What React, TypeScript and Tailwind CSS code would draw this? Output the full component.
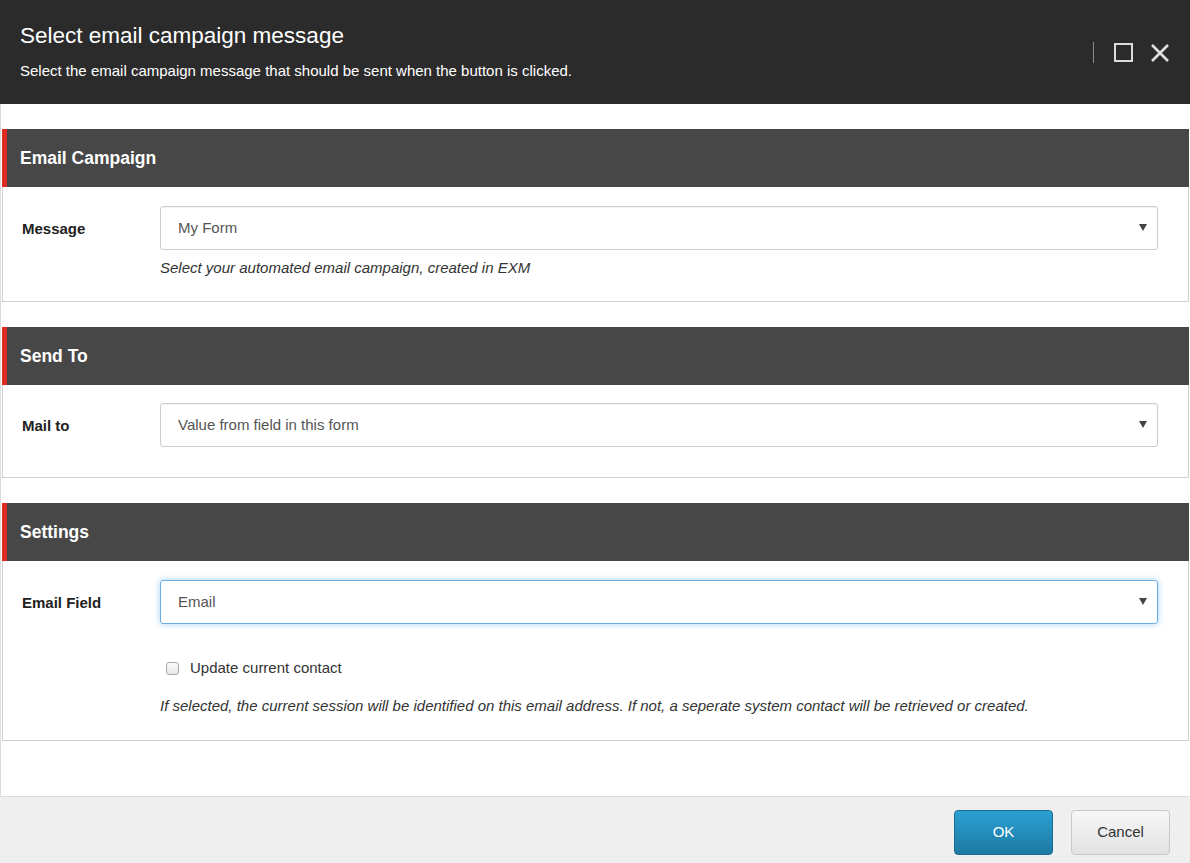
import React from "react";

const font = { fontFamily: '"Liberation Sans", Arial, sans-serif' };

interface PanelProps {
  title: string;
  children: React.ReactNode;
  bodyClass?: string;
}

const Panel: React.FC<PanelProps> = ({ title, children, bodyClass }) => (
  <div className="flex flex-col">
    <div className="h-[58px] bg-[#474747] border-l-[5px] border-[#e02b20] flex items-center pl-[13px]">
      <span className="text-white font-bold text-[17.5px]">{title}</span>
    </div>
    <div className={`border border-t-0 border-[#d0d0d0] ${bodyClass ?? ""}`}>
      {children}
    </div>
  </div>
);

const Select = ({ value, focused }: { value: string; focused?: boolean }) => (
  <div
    className={`h-[44px] flex-1 rounded-[3px] border flex items-center justify-between pl-[17px] pr-[10px] ${
      focused
        ? "border-[#66afe9] shadow-[0_0_6px_rgba(102,175,233,0.6)]"
        : "border-[#cccccc] shadow-[inset_0_1px_1px_rgba(0,0,0,0.05)]"
    }`}
  >
    <span className="text-[15px] text-[#555555]">{value}</span>
    <svg width="8" height="7" viewBox="0 0 8 7" className="mb-[2px]">
      <path d="M0 0 L8 0 L4 7 Z" fill="#444" />
    </svg>
  </div>
);

const Row = ({ label, children }: { label: string; children: React.ReactNode }) => (
  <div className="flex items-center">
    <div className="w-[138px] shrink-0 font-bold text-[15px] text-[#222] pt-[2px]">{label}</div>
    {children}
  </div>
);

export default function App() {
  return (
    <div style={font} className="w-[1190px] h-[863px] flex flex-col bg-white overflow-hidden">
      {/* dialog header */}
      <div className="h-[104px] bg-[#2b2b2b] flex items-start justify-between pl-[20px] pr-[20px] shrink-0">
        <div className="pt-[22px]">
          <div className="text-white text-[22.5px] leading-[28px]">Select email campaign message</div>
          <div className="text-white text-[15px] leading-[20px] mt-[11px]">
            Select the email campaign message that should be sent when the button is clicked.
          </div>
        </div>
        <div className="flex items-center pt-[42px]">
          <div className="w-px h-[21px] bg-[#8a8a8a] mr-[20px]" />
          <div className="w-[19px] h-[19px] border-[2px] border-[#dcdcdc] mr-[17px]" />
          <svg width="20" height="20" viewBox="0 0 20 20">
            <path d="M2 2 L18 18 M18 2 L2 18" stroke="#e0e0e0" strokeWidth="2.6" />
          </svg>
        </div>
      </div>

      {/* body */}
      <div className="flex-1 flex flex-col gap-[25px] pt-[25px] pl-[1px] pr-[1px] border-l border-[#dddddd]">
        <Panel title="Email Campaign" bodyClass="pt-[19px] pb-[23px] pl-[19px] pr-[30px]">
          <Row label="Message">
            <Select value="My Form" />
          </Row>
          <div className="pl-[138px] mt-[8px] italic text-[15px] leading-[20px] text-[#333]">
            Select your automated email campaign, created in EXM
          </div>
        </Panel>

        <Panel title="Send To" bodyClass="pt-[18px] pb-[30px] pl-[19px] pr-[30px]">
          <Row label="Mail to">
            <Select value="Value from field in this form" />
          </Row>
        </Panel>

        <Panel title="Settings" bodyClass="pt-[19px] pb-[24px] pl-[19px] pr-[30px]">
          <Row label="Email Field">
            <Select value="Email" focused />
          </Row>
          <div className="pl-[144px] mt-[33px] flex items-center">
            <div className="w-[13px] h-[13px] rounded-[3px] border border-[#a9a9a9] bg-gradient-to-b from-[#fdfdfd] to-[#e6e6e6]" />
            <span className="ml-[11px] text-[15px] text-[#333]">Update current contact</span>
          </div>
          <div className="pl-[138px] mt-[16px] italic text-[15px] leading-[20px] text-[#333]">
            If selected, the current session will be identified on this email address. If not, a seperate system contact will be retrieved or created.
          </div>
        </Panel>
      </div>

      {/* footer */}
      <div className="h-[67px] shrink-0 bg-[#efefef] border-t border-[#dddddd] flex items-start justify-end gap-[18px] pt-[13px] pr-[20px]">
        <button className="w-[99px] h-[45px] rounded-[4px] border border-[#1c6b90] bg-gradient-to-b from-[#2aa0d2] to-[#1e7aa3] text-white text-[15px]">
          OK
        </button>
        <button className="w-[99px] h-[45px] rounded-[4px] border border-[#c8c8c8] bg-gradient-to-b from-[#f7f7f7] to-[#e2e2e2] text-[#333] text-[15px]">
          Cancel
        </button>
      </div>
    </div>
  );
}
